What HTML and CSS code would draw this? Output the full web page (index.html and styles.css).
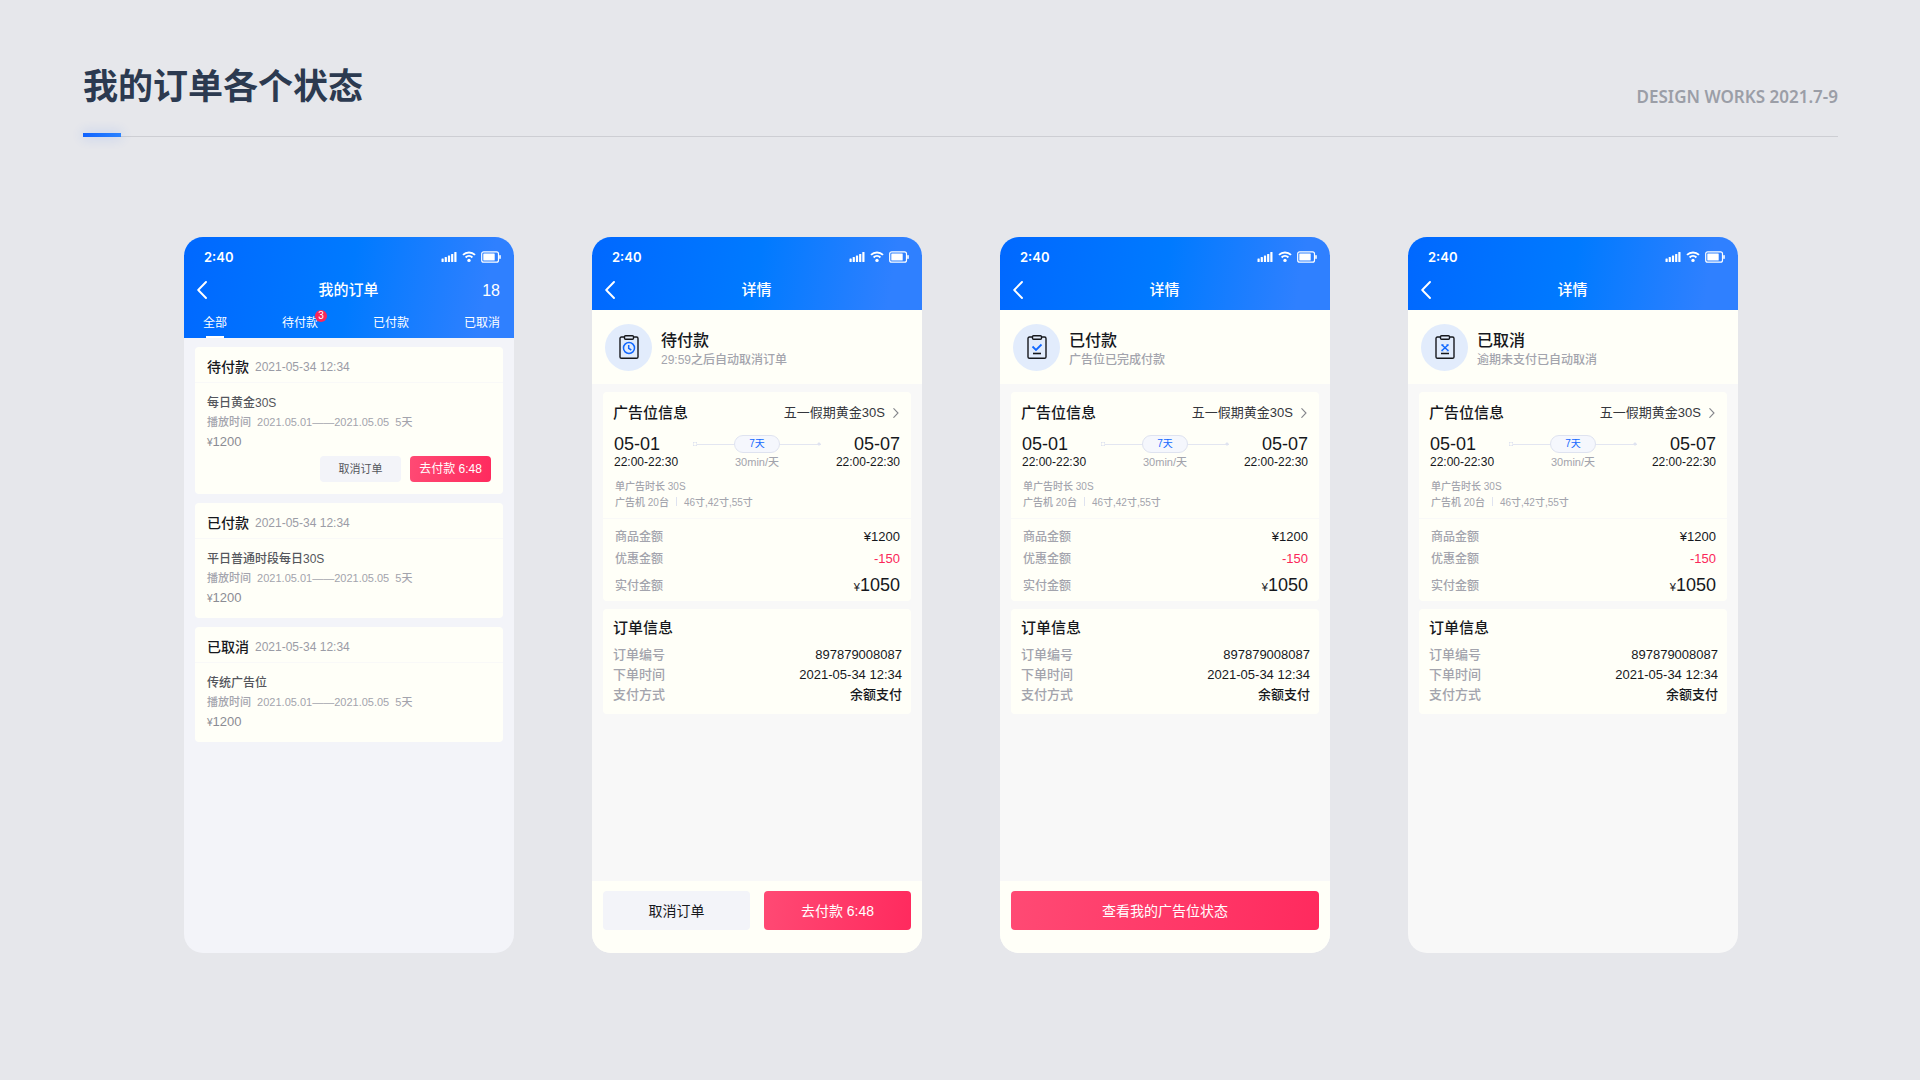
FILE: index.html
```html
<!DOCTYPE html>
<html lang="zh-CN">
<head>
    <meta charset="UTF-8">
    <meta name="viewport" content="width=device-width, initial-scale=1.0">
    <title>我的订单各个状态</title>
    <link rel="stylesheet" href="styles.css">
</head>
<body>

<!-- shared icons -->
<svg class="sprite" aria-hidden="true">
    <symbol id="status-icons" viewBox="0 0 60 12">
        <g fill="#fff">
            <rect x="0.5" y="7.5" width="2.2" height="3.5" rx="0.5"/>
            <rect x="3.7" y="6" width="2.2" height="5" rx="0.5"/>
            <rect x="6.9" y="4.5" width="2.2" height="6.5" rx="0.5"/>
            <rect x="10.1" y="3" width="2.2" height="8" rx="0.5"/>
            <rect x="13.3" y="1" width="2.2" height="10" rx="0.5"/>
            <circle cx="28" cy="9.4" r="1.7"/>
            <rect x="42.3" y="2.4" width="11.4" height="7.200" rx="0.5"/>
            <rect x="58.2" y="4" width="1.6" height="4" rx="0.8"/>
        </g>
        <g fill="none" stroke="#fff">
            <path d="M24.6 6.4a5 5 0 0 1 6.800 0M22 3.900a8.600 8.600 0 0 1 12 0" stroke-width="2"/>
            <rect x="40.7" y="0.8" width="16.8" height="10.4" rx="2" stroke-width="1.2"/>
        </g>
    </symbol>
    <symbol id="back" viewBox="0 0 10 18">
        <path d="M9 1L1.2 9L9 17" fill="none" stroke="#fff" stroke-width="1.9" stroke-linecap="round" stroke-linejoin="round"/>
    </symbol>
    <symbol id="chevron" viewBox="0 0 6 10">
        <path d="M0.8 0.6L5 5L0.8 9.4" fill="none" stroke="#85868c" stroke-width="1.1" stroke-linecap="round"/>
    </symbol>
    <symbol id="clipboard" viewBox="0 0 20 24">
        <path d="M5 2H2.5Q1 2 1 3.500V22Q1 23.200 2.500 23.200H17.500Q19 23.200 19 22V3.500Q19 2 17.500 2H15M6.500 0.700H13.500Q14.500 0.700 14.500 1.700V3.300Q14.500 4.300 13.500 4.300H6.500Q5.500 4.300 5.500 3.300V1.700Q5.500 0.700 6.500 0.700Z" fill="none" stroke="#16181d" stroke-width="1.4"/>
    </symbol>
</svg>

<header class="page-header">
    <h1>我的订单各个状态</h1>
    <p class="works">DESIGN WORKS 2021.7-9</p>
</header>

<main class="phones">

    <!-- 我的订单 -->
    <section class="phone list">
        <div class="top">
            <div class="status-bar">
                <span>2:40</span>
                <svg class="status-icons"><use href="#status-icons"/></svg>
            </div>
            <div class="nav">
                <button class="back" aria-label="返回"><svg><use href="#back"/></svg></button>
                <h2>我的订单</h2>
                <span class="count">18</span>
            </div>
            <nav class="tabs">
                <a href="#" class="active">全部</a>
                <a href="#">待付款<span class="badge">3</span></a>
                <a href="#">已付款</a>
                <a href="#">已取消</a>
            </nav>
        </div>
        <div class="orders">
            <article class="order">
                <div class="order-head"><h3>待付款</h3><time>2021-05-34 12:34</time></div>
                <div class="order-body">
                    <h4>每日黄金30S</h4>
                    <p class="period">播放时间&nbsp; 2021.05.01——2021.05.05&nbsp; 5天</p>
                    <p class="price"><small>¥</small>1200</p>
                    <div class="actions">
                        <button class="btn">取消订单</button>
                        <button class="btn pay">去付款 6:48</button>
                    </div>
                </div>
            </article>
            <article class="order">
                <div class="order-head"><h3>已付款</h3><time>2021-05-34 12:34</time></div>
                <div class="order-body">
                    <h4>平日普通时段每日30S</h4>
                    <p class="period">播放时间&nbsp; 2021.05.01——2021.05.05&nbsp; 5天</p>
                    <p class="price"><small>¥</small>1200</p>
                </div>
            </article>
            <article class="order">
                <div class="order-head"><h3>已取消</h3><time>2021-05-34 12:34</time></div>
                <div class="order-body">
                    <h4>传统广告位</h4>
                    <p class="period">播放时间&nbsp; 2021.05.01——2021.05.05&nbsp; 5天</p>
                    <p class="price"><small>¥</small>1200</p>
                </div>
            </article>
        </div>
    </section>

    <!-- 详情：待付款 -->
    <section class="phone">
        <div class="top">
            <div class="status-bar">
                <span>2:40</span>
                <svg class="status-icons"><use href="#status-icons"/></svg>
            </div>
            <div class="nav">
                <button class="back" aria-label="返回"><svg><use href="#back"/></svg></button>
                <h2>详情</h2>
            </div>
        </div>
        <div class="state">
            <div class="state-icon">
                <svg viewBox="0 0 20 24">
                    <use href="#clipboard"/>
                    <g fill="none" stroke="#1268ff" stroke-width="1.5">
                        <circle cx="10" cy="13" r="5.500"/>
                        <path d="M9.700 10V13.300L12.300 15"/>
                    </g>
                </svg>
            </div>
            <div>
                <h3>待付款</h3>
                <p>29:59之后自动取消订单</p>
            </div>
        </div>
        <div class="cards">
            <div class="card ad">
                <div class="card-head">
                    <h3>广告位信息</h3>
                    <a href="#">五一假期黄金30S<svg><use href="#chevron"/></svg></a>
                </div>
                <div class="range">
                    <div class="day"><b>05-01</b><span>22:00-22:30</span></div>
                    <div class="length">
                        <div class="line"><span>7天</span></div>
                        <p>30min/天</p>
                    </div>
                    <div class="day end"><b>05-07</b><span>22:00-22:30</span></div>
                </div>
                <div class="spec">
                    <p>单广告时长 30S</p>
                    <p>广告机 20台<i></i>46寸,42寸,55寸</p>
                </div>
                <dl class="money">
                    <div><dt>商品金额</dt><dd>¥1200</dd></div>
                    <div><dt>优惠金额</dt><dd class="off">-150</dd></div>
                    <div class="total"><dt>实付金额</dt><dd><small>¥</small>1050</dd></div>
                </dl>
            </div>
            <div class="card info">
                <h3>订单信息</h3>
                <dl>
                    <div><dt>订单编号</dt><dd>897879008087</dd></div>
                    <div><dt>下单时间</dt><dd>2021-05-34 12:34</dd></div>
                    <div><dt>支付方式</dt><dd>余额支付</dd></div>
                </dl>
            </div>
        </div>
        <div class="footer">
            <button class="btn">取消订单</button>
            <button class="btn pay">去付款 6:48</button>
        </div>
    </section>

    <!-- 详情：已付款 -->
    <section class="phone">
        <div class="top">
            <div class="status-bar">
                <span>2:40</span>
                <svg class="status-icons"><use href="#status-icons"/></svg>
            </div>
            <div class="nav">
                <button class="back" aria-label="返回"><svg><use href="#back"/></svg></button>
                <h2>详情</h2>
            </div>
        </div>
        <div class="state">
            <div class="state-icon">
                <svg viewBox="0 0 20 24">
                    <use href="#clipboard"/>
                    <path d="M5.500 11.500L9 15L14.500 9.500" fill="none" stroke="#1268ff" stroke-width="1.8"/>
                    <path d="M6 18.500H14" stroke="#16181d" stroke-width="1.6"/>
                </svg>
            </div>
            <div>
                <h3>已付款</h3>
                <p>广告位已完成付款</p>
            </div>
        </div>
        <div class="cards">
            <div class="card ad">
                <div class="card-head">
                    <h3>广告位信息</h3>
                    <a href="#">五一假期黄金30S<svg><use href="#chevron"/></svg></a>
                </div>
                <div class="range">
                    <div class="day"><b>05-01</b><span>22:00-22:30</span></div>
                    <div class="length">
                        <div class="line"><span>7天</span></div>
                        <p>30min/天</p>
                    </div>
                    <div class="day end"><b>05-07</b><span>22:00-22:30</span></div>
                </div>
                <div class="spec">
                    <p>单广告时长 30S</p>
                    <p>广告机 20台<i></i>46寸,42寸,55寸</p>
                </div>
                <dl class="money">
                    <div><dt>商品金额</dt><dd>¥1200</dd></div>
                    <div><dt>优惠金额</dt><dd class="off">-150</dd></div>
                    <div class="total"><dt>实付金额</dt><dd><small>¥</small>1050</dd></div>
                </dl>
            </div>
            <div class="card info">
                <h3>订单信息</h3>
                <dl>
                    <div><dt>订单编号</dt><dd>897879008087</dd></div>
                    <div><dt>下单时间</dt><dd>2021-05-34 12:34</dd></div>
                    <div><dt>支付方式</dt><dd>余额支付</dd></div>
                </dl>
            </div>
        </div>
        <div class="footer">
            <button class="btn pay">查看我的广告位状态</button>
        </div>
    </section>

    <!-- 详情：已取消 -->
    <section class="phone">
        <div class="top">
            <div class="status-bar">
                <span>2:40</span>
                <svg class="status-icons"><use href="#status-icons"/></svg>
            </div>
            <div class="nav">
                <button class="back" aria-label="返回"><svg><use href="#back"/></svg></button>
                <h2>详情</h2>
            </div>
        </div>
        <div class="state">
            <div class="state-icon">
                <svg viewBox="0 0 20 24">
                    <use href="#clipboard"/>
                    <path d="M7 10L13 15.500M13 10L7 15.500M6.300 9.900H8.500M11.500 9.900H13.700M6.300 15.600H8.500M11.500 15.600H13.700" fill="none" stroke="#1268ff" stroke-width="1.5"/>
                    <path d="M6 18.500H14" stroke="#16181d" stroke-width="1.6"/>
                </svg>
            </div>
            <div>
                <h3>已取消</h3>
                <p>逾期未支付已自动取消</p>
            </div>
        </div>
        <div class="cards">
            <div class="card ad">
                <div class="card-head">
                    <h3>广告位信息</h3>
                    <a href="#">五一假期黄金30S<svg><use href="#chevron"/></svg></a>
                </div>
                <div class="range">
                    <div class="day"><b>05-01</b><span>22:00-22:30</span></div>
                    <div class="length">
                        <div class="line"><span>7天</span></div>
                        <p>30min/天</p>
                    </div>
                    <div class="day end"><b>05-07</b><span>22:00-22:30</span></div>
                </div>
                <div class="spec">
                    <p>单广告时长 30S</p>
                    <p>广告机 20台<i></i>46寸,42寸,55寸</p>
                </div>
                <dl class="money">
                    <div><dt>商品金额</dt><dd>¥1200</dd></div>
                    <div><dt>优惠金额</dt><dd class="off">-150</dd></div>
                    <div class="total"><dt>实付金额</dt><dd><small>¥</small>1050</dd></div>
                </dl>
            </div>
            <div class="card info">
                <h3>订单信息</h3>
                <dl>
                    <div><dt>订单编号</dt><dd>897879008087</dd></div>
                    <div><dt>下单时间</dt><dd>2021-05-34 12:34</dd></div>
                    <div><dt>支付方式</dt><dd>余额支付</dd></div>
                </dl>
            </div>
        </div>
    </section>

</main>

</body>
</html>
```
FILE: styles.css
```css
* {
    box-sizing: border-box;
}
body {
    margin: 0;
    background: #e6e7eb;
    color: #16181d;
    font-family: "Liberation Sans", "Noto Sans CJK SC", sans-serif;
}
h1, h2, h3, h4, p, dl, dd {
    margin: 0;
    font-weight: 500;
}
a {
    color: inherit;
    text-decoration: none;
}
button {
    border: none;
    padding: 0;
    font-family: inherit;
    cursor: pointer;
}
svg {
    display: block;
}
.sprite {
    position: absolute;
    width: 0;
    height: 0;
}

/* Page header */
.page-header {
    position: relative;
    display: flex;
    justify-content: space-between;
    align-items: flex-end;
    margin: 0 82px 0 83px;
    padding: 57px 0 26px;
    border-bottom: 1px solid #cdced3;
}
.page-header::after {
    content: "";
    position: absolute;
    left: 0;
    bottom: -1px;
    width: 38px;
    height: 4px;
    background: linear-gradient(to right, #0f62ff, #2b83ff);
    box-shadow: 0 0 12px rgba(43, 110, 255, 0.3);
}
.page-header h1 {
    font-family: "Noto Sans CJK SC", sans-serif;
    font-size: 35px;
    line-height: 53px;
    font-weight: 700;
    color: #2c3a50;
}
.works {
    font-family: "Noto Sans", sans-serif;
    font-size: 17px;
    line-height: 24px;
    padding-bottom: 1px;
    font-weight: 600;
    color: #9b9ea7;
}

/* Phones */
.phones {
    display: grid;
    grid-template-columns: repeat(4, 1fr);
    gap: 78px;
    padding: 100px 182px 100px 184px;
}
.phone {
    display: flex;
    flex-direction: column;
    min-height: 716px;
    border-radius: 19px;
    overflow: hidden;
    background: #f8f8f8;
}
.phone.list {
    background: #f3f4f9;
}
.top {
    padding-bottom: 8px;
    background: linear-gradient(100deg, #0068ff, #007aff 50%, #2f80ff 90%);
    color: #fff;
}
.list .top {
    padding-bottom: 0;
}
.status-bar {
    display: flex;
    justify-content: space-between;
    align-items: center;
    height: 40px;
    padding: 0 13px 0 20px;
    font-family: Inter, sans-serif;
    font-size: 13px;
    font-weight: 600;
}
.status-icons {
    width: 60px;
    height: 12px;
}
.nav {
    display: grid;
    grid-template-columns: 1fr auto 1fr;
    align-items: center;
    height: 25px;
    padding: 1px 14px 0 13px;
}
.back {
    width: 10px;
    height: 18px;
    background: none;
}
.back svg {
    width: 10px;
    height: 18px;
}
.nav h2 {
    font-size: 15px;
    line-height: 24px;
}
.count {
    padding-top: 2px;
    text-align: right;
    font-size: 16px;
}
.tabs {
    display: flex;
    justify-content: space-between;
    padding: 9px 14px 0 19px;
    font-size: 12px;
    line-height: 24px;
}
.tabs a {
    position: relative;
    height: 27px;
}
.tabs .active::after {
    content: "";
    position: absolute;
    left: 3px;
    right: 3px;
    bottom: 0;
    height: 2px;
    background: #fff;
}
.badge {
    position: absolute;
    top: -1px;
    right: -9px;
    width: 12px;
    border-radius: 6px;
    background: #fb2759;
    font-size: 10px;
    line-height: 12px;
    text-align: center;
}

/* Buttons */
.btn {
    border-radius: 4px;
    background: #f3f4f9;
    color: #16181d;
}
.btn.pay {
    background: linear-gradient(100deg, #ff4a74, #ff2a5e);
    color: #fff;
}

/* Order list */
.orders {
    display: flex;
    flex-direction: column;
    gap: 9px;
    padding: 9px 11px;
}
.order {
    border-radius: 4px;
    background: #fffff8;
}
.order-head {
    display: flex;
    align-items: center;
    gap: 6px;
    height: 36px;
    padding: 2px 12px 0;
    border-bottom: 1px solid #f9f9f8;
}
.order-head h3 {
    font-size: 14px;
}
.order-head time {
    padding-top: 3px;
    font-size: 12px;
    color: #9b9ca6;
}
.order-body {
    padding: 10px 12px;
}
.order-body h4 {
    font-size: 12px;
    line-height: 20px;
    color: #54565c;
}
.period {
    font-size: 11px;
    line-height: 18px;
    color: #a3a4ad;
}
.price {
    padding-top: 2px;
    font-size: 13px;
    line-height: 18px;
    color: #8b8c94;
}
.price small {
    font-size: 10px;
}
.actions {
    display: flex;
    justify-content: flex-end;
    gap: 9px;
    padding: 4px 0 2px;
}
.actions .btn {
    width: 81px;
    height: 26px;
    font-size: 11px;
    line-height: 24px;
    color: #54565c;
}
.actions .pay {
    font-size: 12px;
    color: #fff;
}

/* Order state */
.state {
    display: flex;
    align-items: center;
    gap: 9px;
    height: 74px;
    padding: 0 13px;
    background: #fffff8;
}
.state-icon {
    display: grid;
    place-items: center;
    width: 47px;
    height: 47px;
    border-radius: 50%;
    background: #e2ecfc;
}
.state-icon svg {
    width: 20px;
    height: 24px;
}
.state h3 {
    padding-top: 3px;
    font-size: 16px;
    line-height: 22px;
}
.state p {
    font-size: 12px;
    line-height: 16px;
    color: #a3a4ad;
}

/* Detail cards */
.cards {
    display: flex;
    flex-direction: column;
    gap: 8px;
    padding: 8px 11px;
}
.card {
    border-radius: 4px;
    background: #fffff8;
}
.card h3 {
    font-size: 15px;
    line-height: 20px;
}
.card-head {
    display: flex;
    justify-content: space-between;
    align-items: center;
    padding: 11px 12px 9px 10px;
}
.card-head a {
    display: flex;
    align-items: center;
    gap: 8px;
    font-size: 13px;
    line-height: 18px;
    color: #34363c;
}
.card-head svg {
    width: 6px;
    height: 10px;
}
.range {
    display: flex;
    justify-content: space-between;
    padding: 2px 11px 0;
}
.day b {
    display: block;
    font-size: 18px;
    line-height: 20px;
    font-weight: 400;
}
.day span {
    display: block;
    font-size: 12px;
    line-height: 16px;
}
.end {
    text-align: right;
}
.length {
    width: 128px;
    font-size: 11px;
    line-height: 16px;
    text-align: center;
    color: #a3a4ad;
}
.line {
    position: relative;
    height: 20px;
    padding-top: 1px;
}
.line::before {
    content: "";
    position: absolute;
    left: 0;
    right: 0;
    top: 10px;
    height: 1px;
    background: #e3e6f1;
}
.line span {
    position: relative;
    display: block;
    width: 46px;
    margin: 0 auto;
    border: 1px solid #dfe3f0;
    border-radius: 9px;
    background: #f5f7fd;
    font-size: 10px;
    line-height: 16px;
    color: #1268ff;
}
/* end marks of the line */
.line::after {
    content: "";
    position: absolute;
    left: 0;
    right: 0;
    top: 8px;
    height: 4px;
    background:
        radial-gradient(circle, #fffff8 1px, #dfe3f0 2px) left / 4px 4px no-repeat,
        radial-gradient(circle, #dfe3f0 1px, transparent 2px) right / 4px 4px no-repeat;
}
.spec {
    padding: 9px 12px 7px;
    border-bottom: 1px solid #f9f9f8;
    font-size: 10px;
    line-height: 16px;
    color: #a3a4ad;
}
.spec i {
    display: inline-block;
    width: 1px;
    height: 9px;
    margin: 0 7px;
    background: #dfe3f0;
}
.card dl div {
    display: flex;
    justify-content: space-between;
    align-items: center;
}
.card dt {
    color: #a3a4ad;
}
.money {
    padding: 7px 11px 3px 12px;
    font-size: 13px;
    line-height: 22px;
}
.money dt {
    font-size: 12px;
}
.money .off {
    color: #fb2759;
}
.money .total {
    padding-top: 4px;
}
.total dd {
    font-size: 18px;
}
.total small {
    font-size: 11px;
}
.info {
    padding: 9px 9px 9px 10px;
    font-size: 13px;
    line-height: 20px;
}
.info dl {
    padding-top: 7px;
}

/* Footer */
.footer {
    display: flex;
    gap: 14px;
    margin-top: auto;
    padding: 10px 11px 23px;
    background: #fffff8;
}
.footer .btn {
    flex: 1;
    height: 39px;
    padding-bottom: 2px;
    font-size: 14px;
}
```
